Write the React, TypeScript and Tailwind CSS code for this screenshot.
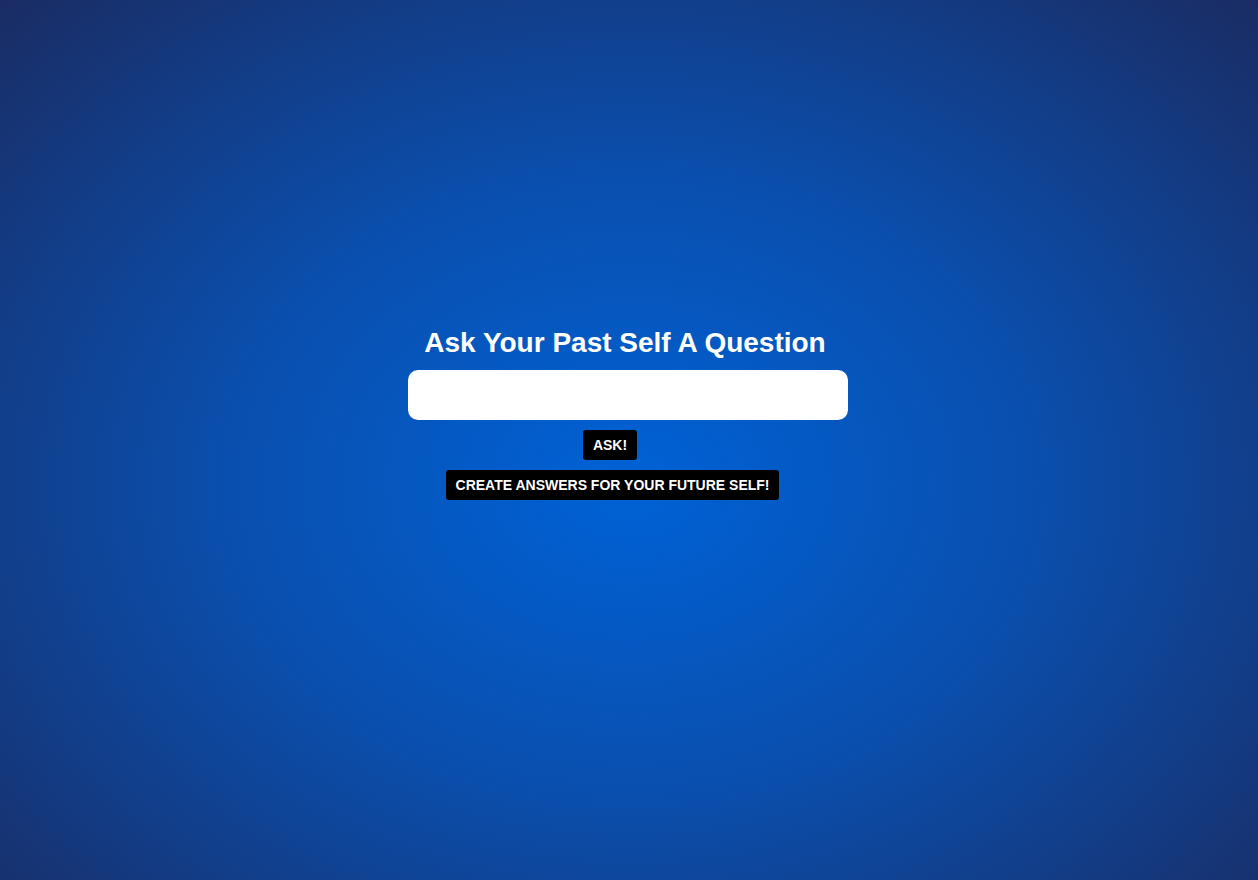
export default function App() {
  return (
    <div className="h-screen w-full bg-[radial-gradient(ellipse_at_50%_55%,#0062d6_0%,#0a4fae_45%,#1a2c63_100%)] font-['Liberation_Sans',Arial,sans-serif] flex flex-col items-center pt-[324px]">
      <h1 className="text-[28px] leading-[38px] font-bold text-white mr-[8px]">
        Ask Your Past Self A Question
      </h1>
      <input
        type="text"
        className="mt-[8px] mr-[2px] w-[440px] h-[50px] rounded-[10px] bg-white outline-none px-3 text-lg"
      />
      <button className="mt-[10px] mr-[38px] h-[30px] px-[10px] bg-black text-white text-[14px] font-bold rounded-[3px]">
        ASK!
      </button>
      <button className="mt-[10px] mr-[33px] h-[30px] px-[10px] bg-black text-white text-[14px] font-bold rounded-[3px]">
        CREATE ANSWERS FOR YOUR FUTURE SELF!
      </button>
    </div>
  );
}
